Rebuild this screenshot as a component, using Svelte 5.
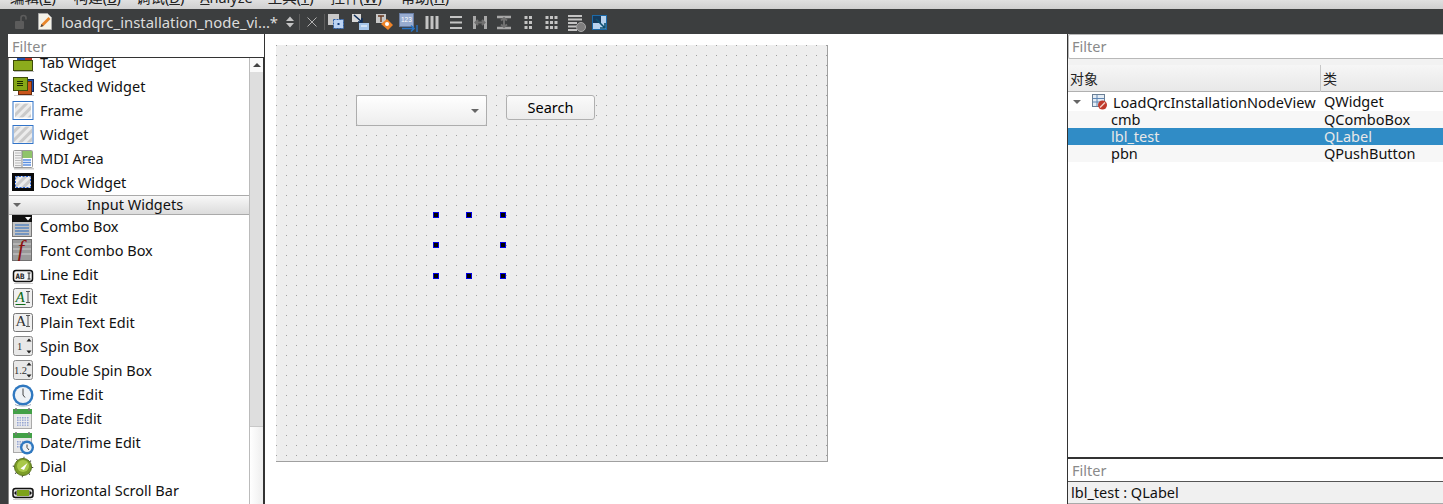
<script>
  const menus = [
    { zh: "编辑", key: "E", left: 10 },
    { zh: "构建", key: "B", left: 18 },
    { zh: "调试", key: "D", left: 15 },
    { latin: "Analyze", left: 16 },
    { zh: "工具", key: "T", left: 15 },
    { zh: "控件", key: "W", left: 17 },
    { zh: "帮助", key: "H", left: 19 },
  ];

  const containers = [
    { name: "Tab Widget", icon: "tab" },
    { name: "Stacked Widget", icon: "stacked" },
    { name: "Frame", icon: "frame" },
    { name: "Widget", icon: "widget" },
    { name: "MDI Area", icon: "mdi" },
    { name: "Dock Widget", icon: "dock" },
  ];

  const inputs = [
    { name: "Combo Box", icon: "combo" },
    { name: "Font Combo Box", icon: "font" },
    { name: "Line Edit", icon: "line" },
    { name: "Text Edit", icon: "text" },
    { name: "Plain Text Edit", icon: "plain" },
    { name: "Spin Box", icon: "spin" },
    { name: "Double Spin Box", icon: "dspin" },
    { name: "Time Edit", icon: "time" },
    { name: "Date Edit", icon: "date" },
    { name: "Date/Time Edit", icon: "datetime" },
    { name: "Dial", icon: "dial" },
    { name: "Horizontal Scroll Bar", icon: "hscroll" },
  ];

  const tools = ["edit", "signal", "buddy", "order", "hbox", "vbox", "hsplit", "vsplit", "grid2", "grid3", "form", "adjust"];

  const objects = [
    { name: "cmb", cls: "QComboBox", alt: true },
    { name: "lbl_test", cls: "QLabel", selected: true },
    { name: "pbn", cls: "QPushButton", alt: true },
  ];
</script>

{#snippet clock(cx, cy, r)}
  <circle {cx} {cy} {r} fill="#2f78c0" />
  <circle {cx} {cy} r={r - 2.4} fill="#eef2f6" />
  <path d="M{cx} {cy - r + 4}V{cy}l2 2.500" fill="none" stroke="#444" stroke-width="1" />
{/snippet}

{#snippet widgetIcon(kind)}
  <svg class="wicon" width="24" height="24" viewBox="0 0 24 24">
    {#if kind === "tab"}
      <rect x="5" y="6" width="8" height="4" fill="#2050b0" />
      <rect x="13" y="6" width="7" height="4" fill="#c03020" />
      <rect x="1.500" y="9.500" width="19" height="10" fill="#8cab1c" stroke="#3d4a08" />
      <rect x="2" y="20" width="20" height="1" fill="#bbb" />
    {:else if kind === "stacked"}
      <rect x="13.500" y="4.500" width="8" height="12" fill="#1c4fb0" stroke="#10285c" />
      <rect x="6.500" y="6.500" width="13" height="13" fill="#c8541a" stroke="#6a2a0c" />
      <rect x="1.500" y="2.500" width="14" height="13" fill="#86a816" stroke="#3f4e08" />
      <path d="M5 6.500h6M5 8.500h6M5 10.500h6" stroke="#1c2c00" />
      <rect x="2" y="20" width="20" height="1" fill="#ccc" />
    {:else if kind === "frame" || kind === "widget"}
      <rect x="1" y="2.500" width="20" height="18" fill="#fff" stroke="#3274c8" />
      <rect x={kind === "frame" ? 3 : 2} y={kind === "frame" ? 4.500 : 3.500} width={kind === "frame" ? 16 : 18} height={kind === "frame" ? 14 : 16} fill="url(#hatch)" />
    {:else if kind === "mdi"}
      <rect x="1.500" y="3.500" width="19" height="17" rx="1" fill="#f2f2f2" stroke="#999" />
      <path d="M3 6h6M3 8.500h6M3 11h6M3 13.500h6M3 16h6M3 18.500h6" stroke="#bbb" />
      <rect x="10" y="4" width="10" height="7" fill="#8fc46a" />
      <rect x="10" y="11" width="10" height="9" fill="#fff" />
      <path d="M11 13h8M11 15.500h8M11 18h8" stroke="#5b8fe0" stroke-width="1.400" />
      <path d="M10 4v16" stroke="#888" />
      <rect x="2" y="21" width="20" height="1.500" fill="#ccc" />
    {:else if kind === "dock"}
      <rect x="0" y="2" width="22" height="18" fill="#0a0a0a" />
      <rect x="3" y="5" width="16" height="12" fill="url(#hatch)" />
      <rect x="3.500" y="5.500" width="15" height="11" fill="none" stroke="#2a66d8" stroke-dasharray="2 1.500" />
    {:else if kind === "combo"}
      <rect x=".5" y=".5" width="19" height="21" fill="#c4c4c4" stroke="#777" />
      <rect x="0" y="0" width="20" height="7" fill="#111" />
      <path d="M13 2h6l-3 3.500z" fill="#fff" />
      <path d="M3 10h14M3 13h14M3 16h14M3 19h14" stroke="#5a87c0" stroke-width="1.600" />
    {:else if kind === "font"}
      <rect x=".5" y=".5" width="19" height="21" fill="#9a9a9a" stroke="#707070" />
      <path d="M1 5h18M1 10h18M1 15h18" stroke="#bdbdbd" stroke-width="1.400" />
      <text x="9" y="17" font-family="Liberation Serif" font-style="italic" font-size="23" fill="#8c1212" text-anchor="middle">f</text>
    {:else if kind === "line"}
      <rect x="1.500" y="7.500" width="19" height="11" rx="2.500" fill="#f4f4f4" stroke="#111" stroke-width="1.500" />
      <text x="3.500" y="15.500" font-family="DejaVu Sans Mono" font-size="7.500" font-weight="700" fill="#222">AB</text>
      <path d="M15.500 10h3M17 10v6M15.500 16h3" stroke="#222" fill="none" />
      <rect x="2" y="20" width="19" height="1" fill="#ccc" />
    {:else if kind === "text" || kind === "plain"}
      <rect x="1.500" y={kind === "text" ? 1.500 : 2.500} width="19" height={kind === "text" ? 19 : 18} rx="2" fill="#f0f0f0" stroke="#777" />
      <text x="3.500" y="15" font-family="Liberation Serif" font-style={kind === "text" ? "italic" : "normal"} font-size="15" fill={kind === "text" ? "#0e6a18" : "#333"}>A</text>
      <path d="M14 4.500h4M16 4.500v11M14 15.500h4" stroke="#555" fill="none" />
      {#if kind === "text"}<path d="M3.500 17.500h10" stroke="#0e6a18" />{/if}
    {:else if kind === "spin" || kind === "dspin"}
      <rect x="1.500" y="1.500" width="19" height="19" rx="2" fill="#e8e8e8" stroke="#888" />
      <text x={kind === "spin" ? 7.500 : 8.500} y="14.500" font-family="Liberation Serif" font-size="10.500" fill="#333" text-anchor="middle">{kind === "spin" ? "1" : "1.2"}</text>
      <path d="M14.500 6.500l2.500-3 2.500 3zM14.500 15.500l2.500 3 2.500-3z" fill="#222" />
    {:else if kind === "time"}
      {@render clock(11, 12, 10.500)}
      <path d="M3 21.500c3 2 13 2 16 0" stroke="#9ab" fill="none" />
    {:else if kind === "date" || kind === "datetime"}
      <rect x="1.500" y="3.500" width="18" height="18" fill="#e6e6e6" stroke="#aaa" />
      <rect x="1" y="2" width="19" height="5" fill="#43a047" />
      <path d="M4 1v3M17 1v3" stroke="#777" stroke-width="1.500" />
      {#if kind === "date"}
        <rect x="4" y="9" width="13" height="10" fill="url(#cal)" />
      {:else}
        <rect x="4" y="9" width="8" height="8" fill="url(#cal)" />
        {@render clock(15, 16.500, 7)}
      {/if}
    {:else if kind === "dial"}
      <circle cx="11" cy="12" r="9.500" fill="none" stroke="#444" stroke-width="1.500" stroke-dasharray="1 6.500" />
      <circle cx="11" cy="12" r="8.500" fill="#7d9e28" stroke="#55701a" />
      <circle cx="11" cy="11" r="6" fill="#a9c84a" />
      <path d="M8.500 13.500l7-5.500-3.500 7z" fill="#fff" />
    {:else if kind === "hscroll"}
      <rect x="1" y="9.500" width="20" height="9" rx="2.500" fill="#ddd" stroke="#111" stroke-width="1.500" />
      <rect x="5" y="11" width="12" height="6" fill="#7da21a" />
      <path d="M2 14l2.500-2.500v5zM20 14l-2.500-2.500v5z" fill="#111" />
      <rect x="1" y="20" width="20" height="1" fill="#ccc" />
    {/if}
  </svg>
{/snippet}

{#snippet toolIcon(kind)}
  <svg width="24" height="24" viewBox="0 0 24 24">
    {#if kind === "edit"}
      <rect x="4" y="4" width="11" height="11" fill="#c8c8c8" />
      <rect x="9.500" y="9.500" width="10" height="9" fill="#bcd4f4" stroke="#2a5ea8" stroke-dasharray="2 1" />
      <rect x="13.500" y="13" width="2" height="2" fill="#123c7c" />
    {:else if kind === "signal"}
      <rect x="4" y="4" width="9" height="8" fill="#d8d8d8" />
      <rect x="11" y="13" width="10" height="7" fill="#a6c6ea" />
      <path d="M6 5l8 7m0-4v4h-4" stroke="#10305c" stroke-width="1.600" fill="none" />
      <path d="M13 16h6" stroke="#fff" />
    {:else if kind === "buddy"}
      <rect x="4" y="4" width="10" height="9" fill="#c8c8c8" />
      <path d="M6 6h6M9 6v6" stroke="#6a3a20" stroke-width="1.400" />
      <path d="M9 14l6-5 6 6-5 5z" fill="#f08428" />
      <circle cx="15" cy="14" r="2" fill="#fff" />
    {:else if kind === "order"}
      <rect x="3.500" y="3.500" width="14" height="13" fill="#98acd0" stroke="#6a7ea4" />
      <text x="5" y="12" font-size="6.500" font-family="Liberation Sans" fill="#fff">123</text>
      <path d="M6 18.500h12m-3-3l3 3-3 3" stroke="#2a74c4" stroke-width="1.600" fill="none" />
      <path d="M21 15v7" stroke="#2a74c4" stroke-width="1.400" />
    {:else if kind === "hbox"}
      <path d="M7 6v13M12 6v13M17 6v13" stroke="#c4c4c4" stroke-width="3" />
    {:else if kind === "vbox"}
      <path d="M6 7h12M6 12.500h12M6 18h12" stroke="#c4c4c4" stroke-width="2.200" />
    {:else if kind === "hsplit"}
      <path d="M6.500 6v13M17.500 6v13" stroke="#a8a8a8" stroke-width="3" />
      <path d="M8 12.500h8M10 10l-2.500 2.500 2.500 2.500M14 10l2.500 2.500-2.500 2.500" stroke="#707070" stroke-width="2" fill="none" />
    {:else if kind === "vsplit"}
      <path d="M5 7h14M5 18h14" stroke="#a8a8a8" stroke-width="2.600" />
      <path d="M12 8v9M9 10.500l3-2.500 3 2.500M9 14.500l3 2.500 3-2.500" stroke="#707070" stroke-width="2" fill="none" />
    {:else if kind === "grid2"}
      <path d="M8.500 6h3v3h-3zM13 6h3v3h-3zM8.500 11h3v3h-3zM13 11h3v3h-3zM8.500 16h3v3h-3zM13 16h3v3h-3z" fill="#c4c4c4" />
    {:else if kind === "grid3"}
      <path d="M5.500 6h3v3h-3zM10 6h3v3h-3zM14.500 6h3v3h-3zM5.500 11h3v3h-3zM10 11h3v3h-3zM14.500 11h3v3h-3zM5.500 16h3v3h-3zM10 16h3v3h-3zM14.500 16h3v3h-3z" fill="#c4c4c4" />
    {:else if kind === "form"}
      <path d="M4 6h14M4 9.500h14M4 13h9M4 16.500h9M4 20h9" stroke="#c4c4c4" stroke-width="2" />
      <circle cx="17" cy="17" r="4.500" fill="#7e7e7e" stroke="#a8a8a8" />
    {:else if kind === "adjust"}
      <rect x="4.500" y="5.500" width="14" height="14" fill="#b8d2ee" stroke="#1c6aa8" />
      <rect x="5" y="6" width="8" height="7" fill="#163a5c" />
      <path d="M8 9l9 9m0-5v5h-5" stroke="#0e5070" stroke-width="1.600" fill="none" />
    {/if}
  </svg>
{/snippet}

<svg class="defs" width="0" height="0" aria-hidden="true">
  <defs>
    <pattern id="hatch" width="6" height="6" patternUnits="userSpaceOnUse" patternTransform="rotate(-45)">
      <rect width="6" height="6" fill="#ececec" />
      <rect width="6" height="3" fill="#cacaca" />
    </pattern>
    <pattern id="cal" width="2.500" height="2.500" patternUnits="userSpaceOnUse">
      <rect width="2.500" height="2.500" fill="#f0f0f0" />
      <rect width="1.500" height="1.500" fill="#8f9fd0" />
    </pattern>
  </defs>
</svg>

<div class="window">
  <nav class="menubar">
    {#each menus as m}
      <span class="menu" style="margin-left: {m.left}px">
        {#if m.latin}<u>A</u>nalyze{:else}{m.zh}(<u>{m.key}</u>){/if}
      </span>
    {/each}
  </nav>

  <header class="toolbar">
    <svg class="lock" width="14" height="16" viewBox="0 0 14 16">
      <rect x="1" y="7" width="9" height="8" rx="1" fill="#5c5c5c" />
      <path d="M7 7V4a2.500 2.500 0 0 1 5 0v1.500" fill="none" stroke="#5c5c5c" stroke-width="1.600" />
    </svg>
    <svg class="doc" width="16" height="17" viewBox="0 0 16 17">
      <path d="M1.500.5h9l4 4v12h-13z" fill="#f4f2e8" stroke="#aaa" />
      <path d="M3.500 14l1-3 7-7 2 2-7 7z" fill="#e8862a" />
      <path d="M3.500 14l1-3 2 2z" fill="#444" />
    </svg>
    <span class="title">loadqrc_installation_node_vi...*</span>
    <svg class="updown" width="10" height="14" viewBox="0 0 10 14">
      <path d="M1 6l4-4.500 4 4.500zM1 8l4 4.500 4-4.500z" fill="#c4c4c4" />
    </svg>
    <i class="sep"></i>
    <svg class="close" width="10" height="10" viewBox="0 0 10 10">
      <path d="M.5.5l9 9M9.500.5l-9 9" stroke="#b0b0b0" />
    </svg>
    <i class="sep"></i>
    <div class="tools">
      {#each tools as t}{@render toolIcon(t)}{/each}
    </div>
  </header>

  <div class="workspace">
    <div class="edge"></div>

    <aside class="box">
      <div class="box-filter">Filter</div>
      <div class="box-body">
        <div class="box-list">
          <div class="box-rows">
            {#each containers as w}
              <div class="row">{@render widgetIcon(w.icon)}<span>{w.name}</span></div>
            {/each}
            <div class="section"><i class="tri"></i><span>Input Widgets</span></div>
            {#each inputs as w}
              <div class="row">{@render widgetIcon(w.icon)}<span>{w.name}</span></div>
            {/each}
          </div>
        </div>
        <div class="scrollbar">
          <div class="sb-up"><i></i></div>
          <div class="sb-thumb"></div>
          <div class="sb-rest"></div>
        </div>
      </div>
    </aside>

    <main class="canvas">
      <div class="form">
        <div class="combo"><i class="tri"></i></div>
        <div class="push">Search</div>
        <div class="selection">
          <b></b><b></b><b></b>
          <b></b><s></s><b></b>
          <b></b><b></b><b></b>
        </div>
      </div>
    </main>

    <aside class="side">
      <div class="obj-filter">Filter</div>
      <div class="gap"></div>
      <div class="tree-head"><span>对象</span><span>类</span></div>
      <div class="tree">
        <div class="tree-row root">
          <span class="name">
            <i class="tri"></i>
            <svg width="18" height="16" viewBox="0 0 18 16">
              <rect x="2.500" y=".5" width="12" height="12" fill="#e4ecf4" stroke="#6a7f96" />
              <path d="M3 4.500h11M3 8h11M7 1v11" stroke="#5f86b4" />
              <circle cx="12.500" cy="11" r="4.500" fill="#c0392b" />
              <path d="M10 13.500l5-5" stroke="#f2d0c8" stroke-width="1.500" />
            </svg>
            <span>LoadQrcInstallationNodeView</span>
          </span>
          <span class="cls">QWidget</span>
        </div>
        {#each objects as o}
          <div class="tree-row" class:alt={o.alt} class:selected={o.selected}>
            <span class="name child">{o.name}</span>
            <span class="cls">{o.cls}</span>
          </div>
        {/each}
      </div>
      <div class="prop-filter">Filter</div>
      <div class="prop-status">lbl_test : QLabel</div>
    </aside>
  </div>
</div>

<style>
  :global(body) {
    background: #fff;
  }

  .defs {
    position: absolute;
  }

  .window {
    width: 1443px;
    height: 504px;
    overflow: hidden;
    display: grid;
    grid-template-rows: 9px 25px 470px;
    font-family: "Noto Sans", "Noto Sans CJK SC", sans-serif;
    font-size: 14.5px;
    color: #111;
  }

  .menubar {
    display: flex;
    align-items: flex-end;
    overflow: hidden;
    background: linear-gradient(#e0e0e0, #cfcfcf);
    color: #222;
  }

  .menu {
    flex: none;
    line-height: 20px;
    margin-bottom: 2px;
    white-space: nowrap;
  }

  .toolbar {
    display: flex;
    align-items: center;
    background: #3c3e3f;
  }

  .lock {
    margin-left: 14px;
    flex: none;
  }

  .doc {
    margin-left: 9px;
    flex: none;
  }

  .title {
    margin-left: 8px;
    width: 224px;
    color: #dcdcdc;
    font-size: 14.900px;
    white-space: nowrap;
    flex: none;
  }

  .updown {
    flex: none;
  }

  .sep {
    width: 1px;
    height: 16px;
    background: #5c5c5c;
    margin-left: 4px;
    flex: none;
  }

  .close {
    margin: 0 7px;
    flex: none;
  }

  .close + .sep {
    margin-left: 0;
  }

  .tools {
    display: flex;
    margin-left: -1px;
  }

  .tools svg {
    display: block;
    flex: none;
  }

  .workspace {
    display: grid;
    grid-template-columns: 8px 257px 802px 376px;
    height: 470px;
    min-height: 0;
  }

  .edge {
    background: #3c3e3f;
  }

  .box {
    display: flex;
    flex-direction: column;
    min-height: 0;
    background: #fff;
    border-right: 2px solid #333;
  }

  .box-filter {
    height: 24px;
    box-sizing: border-box;
    flex: none;
    margin-right: -1px;
    padding-left: 4px;
    line-height: 25px;
    color: #8a8a8a;
    background: #fff;
    border-bottom: 1px solid #333;
  }

  .box-body {
    flex: 1;
    min-height: 0;
    display: flex;
  }

  .box-list {
    flex: 1;
    min-width: 0;
    overflow: hidden;
    border-left: 1px solid #888;
  }

  .box-rows {
    margin-top: -7px;
  }

  .row {
    display: flex;
    align-items: flex-start;
    height: 24px;
    padding-left: 3px;
    white-space: nowrap;
    line-height: 23px;
  }

  .row span {
    margin-left: 4px;
  }

  .wicon {
    flex: none;
    display: block;
  }

  .section {
    box-sizing: border-box;
    height: 20px;
    display: flex;
    align-items: center;
    background: linear-gradient(#f8f8f8, #dcdcdc);
    border-top: 1px solid #aaa;
    border-bottom: 1px solid #aaa;
    padding-left: 4px;
    line-height: 16px;
  }

  .section span {
    flex: 1;
    text-align: center;
    margin-top: -2px;
  }

  .tri {
    display: inline-block;
    flex: none;
    width: 0;
    height: 0;
    border-left: 4px solid transparent;
    border-right: 4px solid transparent;
    border-top: 4px solid #666;
  }

  .scrollbar {
    flex: none;
    display: flex;
    flex-direction: column;
    border-left: 1px solid #bbb;
    box-sizing: border-box;
    width: 14px;
  }

  .sb-up {
    height: 14px;
    display: flex;
    align-items: center;
    justify-content: center;
    background: #fafafa;
  }

  .sb-up i {
    width: 0;
    height: 0;
    border-left: 4px solid transparent;
    border-right: 4px solid transparent;
    border-bottom: 4px solid #444;
  }

  .sb-thumb {
    height: 354px;
    background: #dedede;
    border-bottom: 1px solid #c8c8c8;
  }

  .sb-rest {
    flex: 1;
    background: linear-gradient(90deg, #fff, #eee);
  }

  .canvas {
    background: #fff;
    padding: 11px 0 0 11px;
  }

  .form {
    position: relative;
    box-sizing: border-box;
    width: 552px;
    height: 417px;
    background:
      repeating-linear-gradient(90deg, transparent 0 1px, #eeeeee 1px 10px),
      repeating-linear-gradient(180deg, transparent 0 1px, #eeeeee 1px 10px),
      #a0a0a0;
    background-position: 0 0;
    border-right: 1px solid #a0a0a0;
    border-bottom: 1px solid #a0a0a0;
  }

  .combo {
    position: absolute;
    left: 80px;
    top: 50px;
    width: 131px;
    height: 31px;
    box-sizing: border-box;
    border: 1px solid #adadad;
    border-radius: 2px;
    background: linear-gradient(#fff, #ededed);
    display: flex;
    align-items: center;
    justify-content: flex-end;
    padding-right: 7px;
  }

  .push {
    position: absolute;
    left: 230px;
    top: 50px;
    width: 89px;
    height: 25px;
    box-sizing: border-box;
    border: 1px solid #b0b0b0;
    border-radius: 3px;
    background: linear-gradient(#fafafa, #ececec);
    text-align: center;
    line-height: 23px;
    color: #000;
  }

  .selection {
    position: absolute;
    left: 157px;
    top: 167px;
    width: 72.500px;
    height: 66.500px;
    display: grid;
    grid-template-columns: repeat(3, 6px);
    grid-template-rows: repeat(3, 6px);
    justify-content: space-between;
    align-content: space-between;
  }

  .selection b {
    box-sizing: border-box;
    background: #000;
    border: 1px solid #0000e6;
  }

  .side {
    display: flex;
    flex-direction: column;
    min-height: 0;
    background: #fff;
    border-left: 1px solid #333;
    box-sizing: border-box;
  }

  .obj-filter {
    height: 25px;
    box-sizing: border-box;
    flex: none;
    border: 1px solid #b8b8b8;
    border-right: none;
    border-radius: 2px 0 0 2px;
    padding-left: 3px;
    line-height: 23px;
    color: #8a8a8a;
  }

  .gap {
    height: 6px;
    flex: none;
    background: #f2f2f2;
  }

  .tree-head {
    height: 27px;
    flex: none;
    box-sizing: border-box;
    display: grid;
    grid-template-columns: 252px 1fr;
    background: linear-gradient(#f6f6f6, #e8e8e8);
    border-bottom: 1px solid #b0b0b0;
    line-height: 27px;
    font-family: "Noto Sans CJK SC", sans-serif;
    font-size: 14px;
    color: #222;
  }

  .tree-head span {
    padding-left: 2px;
  }

  .tree-head span + span {
    border-left: 1px solid #c8c8c8;
    padding-left: 2px;
  }

  .tree {
    flex: 1;
    min-height: 0;
  }

  .tree-row {
    display: grid;
    grid-template-columns: 256px 1fr;
    height: 17px;
    line-height: 17px;
    white-space: nowrap;
  }

  .tree-row.root {
    height: 19px;
    line-height: 18px;
  }

  .tree-row.alt {
    background: #f7f7f7;
  }

  .tree-row.selected {
    background: #308cc6;
    color: #e8e8e8;
  }

  .name {
    display: flex;
    align-items: center;
    padding-left: 5px;
    overflow: visible;
  }

  .name.child {
    padding-left: 43px;
  }

  .name .tri {
    margin-right: 9px;
  }

  .name svg {
    flex: none;
    margin-right: 5px;
  }

  .prop-filter {
    height: 25px;
    flex: none;
    box-sizing: border-box;
    border-top: 2px solid #333;
    border-bottom: 1px solid #555;
    padding-left: 4px;
    line-height: 23px;
    color: #8a8a8a;
  }

  .prop-status {
    height: 22px;
    flex: none;
    box-sizing: border-box;
    background: #f0f0f0;
    border-bottom: 1px solid #aaa;
    padding-left: 3px;
    line-height: 21px;
    color: #111;
  }
</style>
